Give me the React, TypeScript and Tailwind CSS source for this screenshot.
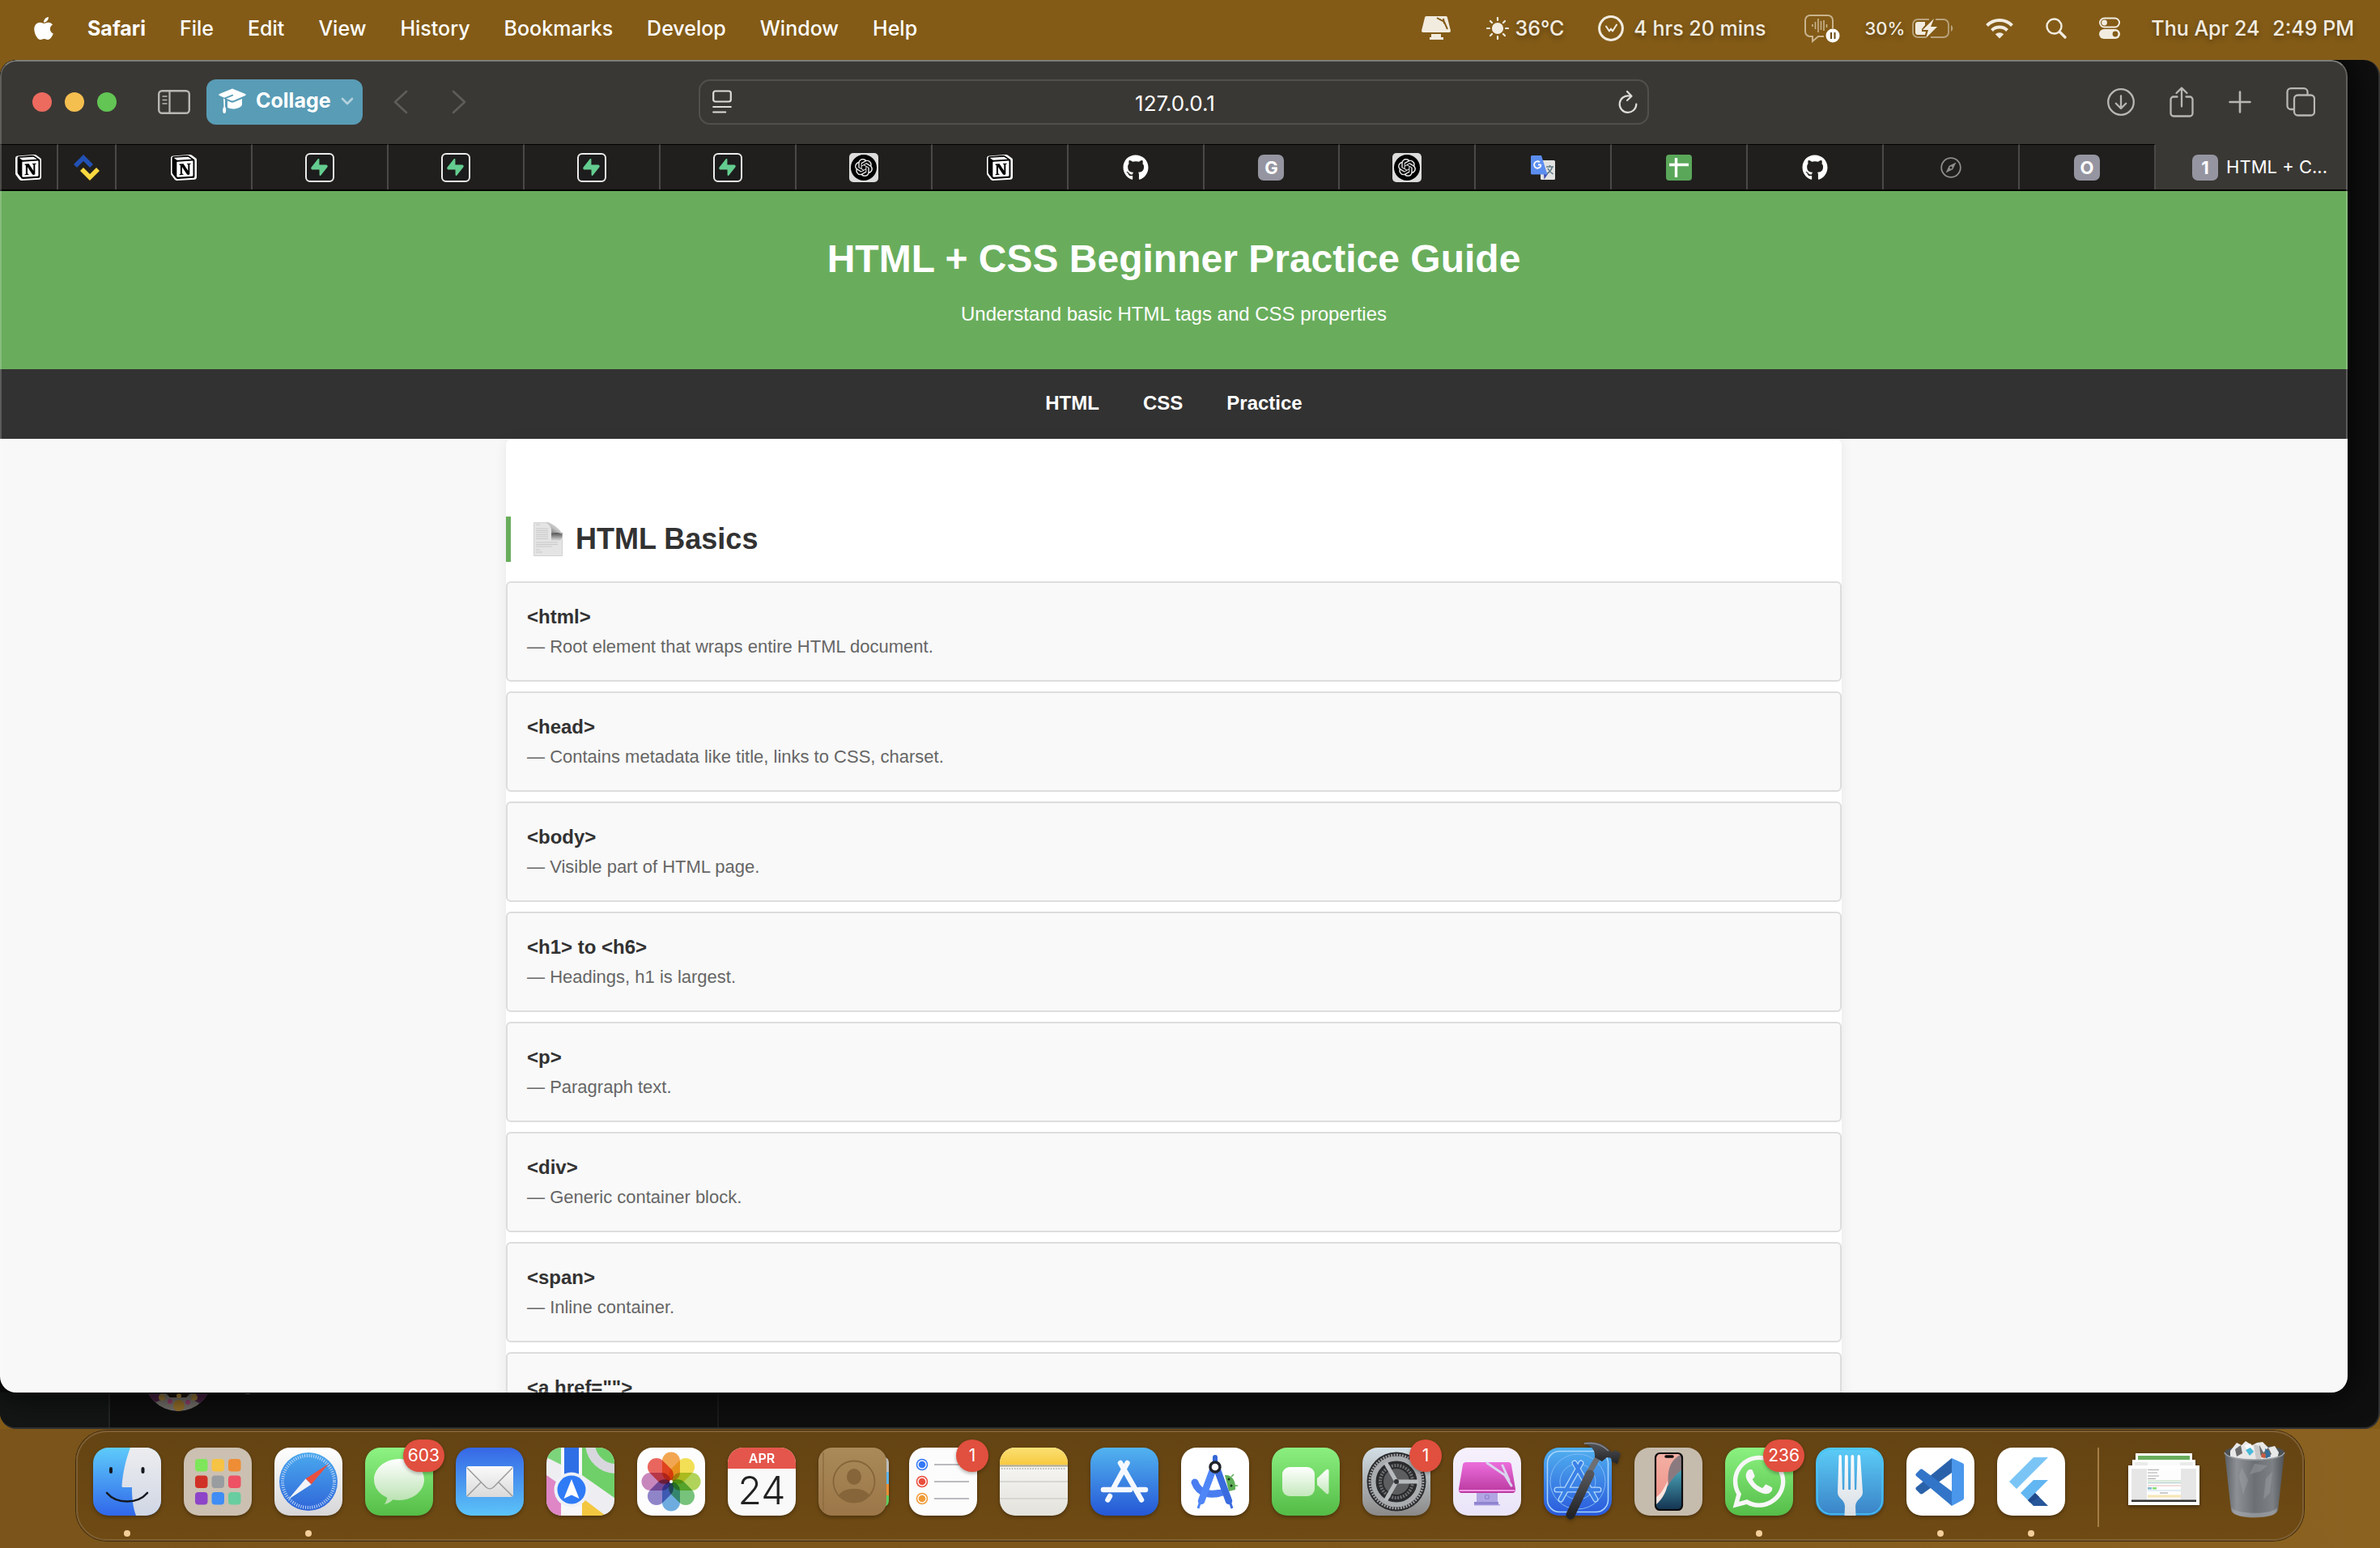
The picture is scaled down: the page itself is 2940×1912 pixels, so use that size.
import type { ReactNode } from "react";
import { FaApple, FaGithub, FaWhatsapp } from "react-icons/fa";
import { SiNotion, SiOpenai, SiSupabase } from "react-icons/si";

const menus = ["File", "Edit", "View", "History", "Bookmarks", "Develop", "Window", "Help"];

const entries = [
  { tag: "<html>", text: "Root element that wraps entire HTML document." },
  { tag: "<head>", text: "Contains metadata like title, links to CSS, charset." },
  { tag: "<body>", text: "Visible part of HTML page." },
  { tag: "<h1> to <h6>", text: "Headings, h1 is largest." },
  { tag: "<p>", text: "Paragraph text." },
  { tag: "<div>", text: "Generic container block." },
  { tag: "<span>", text: "Inline container." },
  { tag: '<a href="">', text: "Hyperlink." },
];

/* ---------- Menu bar ---------- */

function MonitorIcon() {
  return (
    <svg className="h-8 w-9" viewBox="0 0 36 32" aria-hidden="true">
      <path d="M6 1h24a2 2 0 0 1 2 2l4 16a2 2 0 0 1-2 2H2a2 2 0 0 1-2-2L4 3a2 2 0 0 1 2-2Z" fill="currentColor" />
      <path d="M12 23h12v4h3v3H10v-3h2Z" fill="currentColor" />
      <path d="m19 3 9 5 4 9M27 4l1 6" stroke="#835b17" strokeWidth="2" fill="none" />
    </svg>
  );
}

function SunIcon() {
  return (
    <svg className="size-7" viewBox="0 0 28 28" fill="none" stroke="currentColor" strokeWidth="2.2" strokeLinecap="round" aria-hidden="true">
      <circle cx="14" cy="14" r="6" fill="currentColor" />
      <path d="M14 1v3M14 24v3M1 14h3M24 14h3M5 5l2 2M21 21l2 2M5 23l2-2M21 7l2-2" />
    </svg>
  );
}

function ClockIcon() {
  return (
    <svg className="size-8" viewBox="0 0 32 32" fill="none" stroke="currentColor" aria-hidden="true">
      <circle cx="16" cy="16" r="14.4" strokeWidth="3" />
      <path d="m10 13.500 4 6 2-3 2 3 5-8" strokeWidth="2" strokeLinecap="round" strokeLinejoin="round" />
    </svg>
  );
}

function BubbleIcon() {
  return (
    <svg className="h-9 w-11" viewBox="0 0 44 36" fill="none" aria-hidden="true">
      <path d="M35 18V8a6 6 0 0 0-6-6H7a6 6 0 0 0-6 6v14a6 6 0 0 0 6 6h3v6l7-6h7" stroke="#c9b38c" strokeWidth="2" />
      <path d="M10 13v3M13.500 10v9M17 6v17M20.500 9v11M24 8v13M27.500 13v4" stroke="#c9b38c" strokeWidth="1.600" />
      <circle cx="35" cy="27" r="8.500" fill="#fff" />
      <path d="M33 23v8M37.500 23v8" stroke="#6b4a12" strokeWidth="2" />
    </svg>
  );
}

function BatteryIcon() {
  return (
    <svg className="h-7 w-13" viewBox="0 0 52 28" fill="none" aria-hidden="true">
      <path d="M22 3H8a6 6 0 0 0-6 6v10a6 6 0 0 0 6 6h10M30 3h10a6 6 0 0 1 6 6v10a6 6 0 0 1-6 6H24" stroke="#b9a47d" strokeWidth="1.800" />
      <path d="M49 10c3 2 3 6 0 8Z" fill="#b9a47d" />
      <path d="M8 6h9v4l-4 5v3h5l-1 4H8a3 3 0 0 1-3-3V9a3 3 0 0 1 3-3Z" fill="currentColor" />
      <path d="M28 2 14 16h7l-3 10 14-14h-8Z" fill="currentColor" />
    </svg>
  );
}

function WifiIcon() {
  return (
    <svg className="h-[26px] w-[34px]" viewBox="0 0 34 26" fill="none" stroke="currentColor" strokeWidth="4" aria-hidden="true">
      <path d="M1.500 9.500a22 22 0 0 1 31 0M7.500 15.500a13.500 13.500 0 0 1 19 0" />
      <path d="M17 25.500 11.800 20.300a7.400 7.400 0 0 1 10.400 0Z" fill="currentColor" stroke="none" />
    </svg>
  );
}

function SearchIcon() {
  return (
    <svg className="size-[26px]" viewBox="0 0 26 26" fill="none" stroke="currentColor" strokeLinecap="round" aria-hidden="true">
      <circle cx="10.500" cy="10.500" r="9" strokeWidth="2.400" />
      <path d="m17.500 17.500 6.500 6.500" strokeWidth="3.200" />
    </svg>
  );
}

function ControlIcon() {
  return (
    <svg className="h-7 w-[26px]" viewBox="0 0 26 28" fill="none" aria-hidden="true">
      <rect x="1" y="1.500" width="24" height="11" rx="5.500" stroke="currentColor" strokeWidth="2" />
      <circle cx="6.500" cy="7" r="3.400" fill="currentColor" />
      <rect x="0" y="15" width="26" height="12" rx="6" fill="currentColor" />
      <circle cx="20" cy="21" r="3.400" fill="#835b17" />
    </svg>
  );
}

function MenuBar() {
  return (
    <header className="flex h-[74px] shrink-0 items-center justify-between bg-[#835b17] pr-8 pb-1 pl-[38px] text-[25px] leading-8 font-medium text-white [text-shadow:0_3px_6px_rgba(0,0,0,0.35)]">
      <nav aria-label="Application menu" className="flex items-center gap-[42px]">
        <button aria-label="Apple menu" className="-mr-1">
          <FaApple className="size-8" />
        </button>
        <button className="font-bold">Safari</button>
        {menus.map((m) => (
          <button key={m}>{m}</button>
        ))}
      </nav>
      <div className="flex items-center gap-10 text-[#f2ece0]">
        <MonitorIcon />
        <span className="ml-1 flex items-center gap-2">
          <SunIcon />
          36°C
        </span>
        <span className="ml-0.5 flex items-center gap-3">
          <ClockIcon />4 hrs 20 mins
        </span>
        <span className="-mr-[10px] ml-2">
          <BubbleIcon />
        </span>
        <span className="flex items-center gap-2">
          <span className="text-[22px]">30%</span>
          <BatteryIcon />
        </span>
        <WifiIcon />
        <SearchIcon />
        <ControlIcon />
        <span className="-ml-0.5 flex gap-4">
          <span>Thu Apr 24</span>
          <span>2:49 PM</span>
        </span>
      </div>
    </header>
  );
}

/* ---------- Browser toolbar ---------- */

function SidebarIcon() {
  return (
    <svg className="h-[30px] w-10" viewBox="0 0 40 30" fill="none" stroke="currentColor" aria-hidden="true">
      <rect x="1.200" y="1.200" width="37.600" height="27.600" rx="4" strokeWidth="2.400" />
      <path d="M14.500 1v28" strokeWidth="2.200" />
      <path d="M5.500 8h6M5.500 12.500h6M5.500 17h6" strokeWidth="1.500" />
    </svg>
  );
}

function CapIcon() {
  return (
    <svg className="h-8 w-[34px]" viewBox="0 0 34 32" fill="currentColor" aria-hidden="true">
      <path d="M17 .500 33 7c1 .500 1 1.500 0 2L19 15c-1.500.600-3 .500-4 0l-5.500-2.200 8-3.300c1.300-.5.700-2.200-.6-1.700L7 11.800 1 9C0 8.500 0 7.500 1 7Z" />
      <path d="m11 15.500 3.500 1.600c1.700.700 3.300.700 5 0L29 13v7c0 3-6 5.500-11 5.500-3 0-5-.6-7-1.700Z" />
      <path d="M6 12.500 8 14v9c1.500 1 1.500 6 .500 7.500-.8.800-2 .8-2.600 0C5 29 5 24 6.500 23Z" />
    </svg>
  );
}

function Chevron({ dir }: { dir: "left" | "right" }) {
  return (
    <svg className="h-[30px] w-[18px]" viewBox="0 0 18 30" fill="none" stroke="#5f5d59" strokeWidth="2.600" strokeLinecap="round" strokeLinejoin="round" aria-hidden="true">
      <path d={dir === "left" ? "M16 2 2 15l14 13" : "M2 2l14 13L2 28"} />
    </svg>
  );
}

function Toolbar() {
  return (
    <div className="flex h-[104px] shrink-0 items-center bg-[#3a3834] px-10 text-[#b9b7b3]">
      <div className="flex flex-1 items-center">
        <div className="flex gap-4">
          <button aria-label="Close" className="size-6 rounded-full bg-[#ed6a5f]" />
          <button aria-label="Minimise" className="size-6 rounded-full bg-[#f5bf4f]" />
          <button aria-label="Zoom" className="size-6 rounded-full bg-[#62c554]" />
        </div>
        <button aria-label="Sidebar" className="ml-[51px]">
          <SidebarIcon />
        </button>
        <button className="ml-5 flex h-14 w-[193px] items-center gap-3 rounded-xl bg-[#599cb6] pb-0.5 pl-[15px] text-[25px] font-bold text-white">
          <CapIcon />
          Collage
          <svg className="h-[10px] w-4" viewBox="0 0 16 10" fill="none" stroke="#b4d2de" strokeWidth="2.600" strokeLinecap="round" strokeLinejoin="round" aria-hidden="true">
            <path d="m2 2 6 6 6-6" />
          </svg>
        </button>
        <button aria-label="Back" className="ml-[38px]">
          <Chevron dir="left" />
        </button>
        <button aria-label="Forward" className="ml-[54px]">
          <Chevron dir="right" />
        </button>
      </div>
      <label className="flex h-14 w-[1174px] items-center justify-between rounded-[14px] border-2 border-[#51504c] pr-3 pl-[15px] text-[#dddcd9]">
        <svg className="h-[30px] w-6" viewBox="0 0 24 30" fill="none" stroke="currentColor" strokeWidth="2.200" strokeLinecap="round" aria-hidden="true">
          <rect x="1.200" y="1.500" width="21.600" height="13" rx="2.500" />
          <path d="M1.200 21h21.600M1.200 27.500h15" />
        </svg>
        <input aria-label="Address" defaultValue="127.0.0.1" className="min-w-0 flex-1 bg-transparent pt-0.5 text-center text-[26px] text-white outline-none" />
        <svg className="h-[30px] w-6" viewBox="0 0 24 30" fill="none" stroke="currentColor" strokeWidth="2.200" strokeLinecap="round" strokeLinejoin="round" aria-hidden="true">
          <path d="M14 7.500a10.300 10.300 0 1 0 8.300 10M11 2l5.500 5.800L11 13" />
        </svg>
      </label>
      <div className="flex flex-1 items-center justify-end gap-[43px]">
        <button aria-label="Downloads">
          <svg className="size-[34px]" viewBox="0 0 34 34" fill="none" stroke="currentColor" strokeWidth="2.300" strokeLinecap="round" strokeLinejoin="round" aria-hidden="true">
            <circle cx="17" cy="17" r="15.800" />
            <path d="M17 9.500v15M10.800 18.800 17 25l6.200-6.200" />
          </svg>
        </button>
        <button aria-label="Share">
          <svg className="h-[38px] w-[30px]" viewBox="0 0 30 38" fill="none" stroke="currentColor" strokeWidth="2.300" strokeLinecap="round" strokeLinejoin="round" aria-hidden="true">
            <path d="M9.500 12.500H5a3.500 3.500 0 0 0-3.500 3.500v17A3.500 3.500 0 0 0 5 36.500h20a3.500 3.500 0 0 0 3.500-3.500V16a3.500 3.500 0 0 0-3.500-3.500h-4.500M15 24.500V2M8.500 8 15 1.700 21.500 8" />
          </svg>
        </button>
        <button aria-label="New tab">
          <svg className="size-7" viewBox="0 0 28 28" stroke="currentColor" strokeWidth="2.600" strokeLinecap="round" aria-hidden="true">
            <path d="M14 1.500v25M1.500 14h25" />
          </svg>
        </button>
        <button aria-label="Tab overview">
          <svg className="size-9" viewBox="0 0 36 36" fill="none" stroke="currentColor" strokeWidth="2.300" aria-hidden="true">
            <rect x="10" y="9.500" width="25" height="25" rx="4.500" />
            <path d="M10 27H6a4.500 4.500 0 0 1-4.500-4.500v-17A4.500 4.500 0 0 1 6 1.200h16a4.500 4.500 0 0 1 4.500 4.500v3.500" />
          </svg>
        </button>
      </div>
    </div>
  );
}

/* ---------- Tabs ---------- */

function Notion() {
  return (
    <span className="grid size-8 place-items-center">
      <svg className="col-start-1 row-start-1 size-8" viewBox="0 0 32 32" aria-hidden="true">
        <path d="M3 1.600 22.500 0c1.500-.1 2.500 0 3.500.7l4.800 3.500c1 .7 1.200 1.400 1.200 2.600V27.500c0 2-.9 3-2.700 3.200L8 32c-1.500.1-2.400-.2-3.200-1.200L.9 25.600C.2 24.600 0 24 0 22.700V4.500C0 2.700 1.200 1.800 3 1.600Z" fill="#fff" />
      </svg>
      <SiNotion className="col-start-1 row-start-1 size-[29px] text-black" />
    </span>
  );
}

function Supabase() {
  return (
    <span className="flex size-9 items-center justify-center rounded-[6px] border-2 border-[#ececec] bg-[#1c1c1c]">
      <SiSupabase className="size-[21px] text-[#64cc8f]" />
    </span>
  );
}

function Gpt() {
  return (
    <span className="flex size-9 items-center justify-center rounded-[5px] bg-[#dcdcdc]">
      <span className="flex size-8 items-center justify-center rounded-full bg-black">
        <SiOpenai className="size-[22px] text-[#e6e6e6]" />
      </span>
    </span>
  );
}

function Letter({ children }: { children: string }) {
  return (
    <span className="flex size-8 items-center justify-center rounded-[7px] bg-[#9595a1] text-[22px] leading-8 font-bold text-white">
      {children}
    </span>
  );
}

function Ribbon() {
  return (
    <svg className="size-8" viewBox="0 0 32 32" fill="none" strokeWidth="5.600" aria-hidden="true">
      <path d="m2 14 10-10 10 10" stroke="#2251b5" />
      <path d="m10 18 10 10 10-10" stroke="#fbd93f" />
    </svg>
  );
}

function Translate() {
  return (
    <svg className="size-8" viewBox="0 0 32 32" aria-hidden="true">
      <rect x="13" y="7" width="18" height="24" rx="1.500" fill="#e2e2e2" />
      <path d="M20 15h9M24.500 13v2M27.500 15c-1 4-4 7-7 9M22 17c1.500 3 4 5.500 6.500 7" stroke="#607b86" strokeWidth="1.600" fill="none" />
      <path d="M17 24h5l-4.500 6.500Z" fill="#4150b0" />
      <path d="M2.500 1H14l7.500 23.500h-19A1.500 1.500 0 0 1 1 23V2.500A1.500 1.500 0 0 1 2.500 1Z" fill="#5b8def" />
      <path d="M13.500 12.500H10M13.500 12.500A4.200 4.200 0 1 1 12 9.300" stroke="#fff" strokeWidth="1.900" fill="none" />
    </svg>
  );
}

function Sheets() {
  return (
    <svg className="size-8" viewBox="0 0 32 32" aria-hidden="true">
      <rect width="32" height="32" rx="4" fill="#5aa75a" />
      <path d="M4 12.500h24M12.500 4v24" stroke="#fff" strokeWidth="3.400" />
    </svg>
  );
}

function Compass() {
  return (
    <svg className="size-[26px]" viewBox="0 0 26 26" fill="none" stroke="#8f8d8a" strokeWidth="1.800" aria-hidden="true">
      <circle cx="13" cy="13" r="11.800" />
      <path d="m19.500 6.500-4.200 8.800-8.800 4.200 4.200-8.800Z" fill="#8f8d8a" stroke="none" />
      <circle cx="13" cy="13" r="1.500" fill="#201f1d" stroke="none" />
    </svg>
  );
}

const github = <FaGithub className="size-8 text-white" />;

const tabs: { name: string; icon: ReactNode }[] = [
  { name: "Notion", icon: <Notion /> },
  { name: "Supabase", icon: <Supabase /> },
  { name: "Supabase auth", icon: <Supabase /> },
  { name: "Supabase tables", icon: <Supabase /> },
  { name: "Supabase docs", icon: <Supabase /> },
  { name: "ChatGPT", icon: <Gpt /> },
  { name: "Notion notes", icon: <Notion /> },
  { name: "GitHub", icon: github },
  { name: "G", icon: <Letter>G</Letter> },
  { name: "ChatGPT chat", icon: <Gpt /> },
  { name: "Translate", icon: <Translate /> },
  { name: "Sheets", icon: <Sheets /> },
  { name: "GitHub repository", icon: github },
  { name: "Safari page", icon: <Compass /> },
  { name: "O", icon: <Letter>O</Letter> },
];

function TabBar() {
  return (
    <div role="tablist" className="flex h-[58px] shrink-0 border-b-2 border-black bg-[#201f1d]">
      <button role="tab" aria-label="Pinned Notion" className="flex w-[72px] items-center justify-center border-t border-r-2 border-t-black border-r-[#4b4947]">
        <Notion />
      </button>
      <button role="tab" aria-label="Pinned page" className="flex w-[72px] items-center justify-center border-t border-r-2 border-t-black border-r-[#4b4947]">
        <Ribbon />
      </button>
      {tabs.map((t) => (
        <button key={t.name} role="tab" aria-label={t.name} className="flex flex-1 items-center justify-center border-t border-r-2 border-t-black border-r-[#4b4947]">
          {t.icon}
        </button>
      ))}
      <button role="tab" aria-selected="true" className="flex w-[237px] items-center justify-center gap-[10px] bg-[#3a3834] pt-px pl-5 text-[22px] text-white">
        <Letter>1</Letter>
        HTML + C...
      </button>
    </div>
  );
}

/* ---------- Web page ---------- */

function PageEmoji() {
  return (
    <svg className="h-[42px] w-9" viewBox="0 0 36 42" aria-hidden="true">
      <defs>
        <linearGradient id="curl" x1="0" y1="1" x2="1" y2="0">
          <stop offset="0" stopColor="#4a4a4a" />
          <stop offset=".5" stopColor="#bdbdbd" />
          <stop offset="1" stopColor="#fafafa" />
        </linearGradient>
        <linearGradient id="curlShade" x1="0" y1="0" x2="0" y2="1">
          <stop offset="0" stopColor="#4f4f4f" />
          <stop offset="1" stopColor="#e2e2e2" />
        </linearGradient>
      </defs>
      <path d="M.500.500h18L35.500 14v27.500H.500Z" fill="#e4e4e4" stroke="#d2d2d2" />
      <path d="M3 3h5M3 8h15M3 10.500h15M3 13h15M3 15.500h15M3 18h15M3 20.500h15M3 25h27M3 27.500h27M3 30h20M3 34h5M3 37h8" stroke="#c9c9c9" strokeWidth="1" />
      <path d="M22 13h13.500v5L33 23H22Z" fill="url(#curlShade)" />
      <path d="M15 .500c6 2 8 8 7 13.500 5-1.500 9-1.500 13.500 1C33 9 26 3 18.500.500Z" fill="url(#curl)" />
    </svg>
  );
}

function WebPage() {
  return (
    <div className="flex min-h-0 flex-1 flex-col overflow-hidden bg-[#f8f8f8] font-['Liberation_Sans',Arial,sans-serif]">
      <header className="bg-[#69ad5c] pt-12 pb-[50px] text-center text-white">
        <h1 className="text-[48px] leading-[72px] font-bold">HTML + CSS Beginner Practice Guide</h1>
        <p className="mt-[14px] text-[24px] leading-9">Understand basic HTML tags and CSS properties</p>
      </header>
      <nav className="flex justify-center gap-[54px] bg-[#323232] pt-6 pb-[26px] text-[24px] leading-9 font-bold text-white">
        <a href="#html">HTML</a>
        <a href="#css">CSS</a>
        <a href="#practice">Practice</a>
      </nav>
      <main className="mx-auto w-full max-w-[1650px] shrink-0 rounded-lg bg-white pt-24 shadow-[0_0_16px_rgba(0,0,0,0.07)]">
        <section id="html">
          <h2 className="mb-6 flex h-14 items-center gap-4 border-l-[6px] border-[#69ad5c] pl-7 text-[36px] leading-[56px] font-bold text-[#323232]">
            <PageEmoji />
            HTML Basics
          </h2>
          <ul className="flex flex-col gap-3">
            {entries.map((e) => (
              <li key={e.tag} className="rounded-md border-2 border-[#dddddd] bg-[#f9f9f9] px-6 pt-6 pb-[22px]">
                <strong className="block text-[24px] leading-9 text-[#323232]">{e.tag}</strong>
                <span className="block text-[22px] leading-[38px] text-[#666666]">— {e.text}</span>
              </li>
            ))}
          </ul>
        </section>
      </main>
    </div>
  );
}

/* ---------- Dock ---------- */

function Art({ children }: { children: ReactNode }) {
  return (
    <svg className="size-[84px] overflow-visible drop-shadow-[0_2px_2px_rgba(0,0,0,0.3)]" viewBox="0 0 84 84" fill="none" aria-hidden="true">
      {children}
    </svg>
  );
}

function Grad({ id, from, to }: { id: string; from: string; to: string }) {
  return (
    <linearGradient id={id} x1="0" y1="0" x2="0" y2="1">
      <stop stopColor={from} />
      <stop offset="1" stopColor={to} />
    </linearGradient>
  );
}

function Tile({ fill }: { fill: string }) {
  return <rect width="84" height="84" rx="19" fill={fill} />;
}

const finder = (
  <Art>
    <defs>
      <Grad id="fA" from="#5ecbfa" to="#3067ea" />
      <Grad id="fB" from="#ededf0" to="#cfd6e4" />
      <clipPath id="fC"><rect width="84" height="84" rx="19" /></clipPath>
    </defs>
    <g clipPath="url(#fC)">
      <rect width="84" height="84" fill="url(#fA)" />
      <path d="M46 0c-6 16-9 30-10.500 47 0 1.500.5 2 2 2H48c0 13 1 24 5 35h31V0Z" fill="url(#fB)" />
    </g>
    <path d="M22 26v4M61.500 26v4" stroke="#15181f" strokeWidth="4" strokeLinecap="round" />
    <path d="M17 56c12 14 38 14 50 0" stroke="#15181f" strokeWidth="2.600" strokeLinecap="round" />
  </Art>
);

const padColors = ["#7ee65a", "#f7c344", "#ee8d35", "#d03026", "#9a9da0", "#ee5163", "#8e44c8", "#3f8df5", "#68cda0"];

const launchpad = (
  <Art>
    <Tile fill="#cbc0b1" />
    {padColors.map((c, i) => (
      <rect key={c} x={14 + (i % 3) * 20.500} y={14 + Math.floor(i / 3) * 20.500} width="15.500" height="15.500" rx="4" fill={c} />
    ))}
  </Art>
);

const safari = (
  <Art>
    <defs>
      <Grad id="sA" from="#ffffff" to="#d6d6d8" />
      <Grad id="sB" from="#4aa9ee" to="#2f66d9" />
    </defs>
    <Tile fill="url(#sA)" />
    <circle cx="42" cy="42" r="36" fill="url(#sB)" />
    <circle cx="42" cy="42" r="32" stroke="#c4dcf8" strokeWidth="4" strokeDasharray="1 1.800" />
    <path d="M67 20 45.500 45.500 38.500 38.500Z" fill="#e9503f" />
    <path d="M17 64 38.500 38.500 45.500 45.500Z" fill="#f2f4f7" />
  </Art>
);

const messages = (
  <Art>
    <defs>
      <Grad id="mA" from="#8df383" to="#55bd47" />
      <Grad id="mB" from="#ffffff" to="#b5e0ac" />
    </defs>
    <Tile fill="url(#mA)" />
    <path d="M42 14c17 0 31 11.500 31 25.500S59 65 42 65c-2.700 0-5.200-.3-7.600-.8-2.800 3-6.400 5-10.900 5.800 2.200-2.500 3.500-5.200 3.700-8.300C17 57.200 11 49 11 39.500 11 25.500 25 14 42 14Z" fill="url(#mB)" />
  </Art>
);

const mail = (
  <Art>
    <defs>
      <Grad id="eA" from="#3667e6" to="#5cc4f8" />
      <Grad id="eB" from="#fafafa" to="#dadada" />
    </defs>
    <Tile fill="url(#eA)" />
    <rect x="13" y="23" width="58" height="38" rx="3" fill="url(#eB)" />
    <path d="m14 25 23 23.500c3 3 7 3 10 0L70 25M14 60l17-17M70 60 53 43" stroke="#9b9b9b" strokeWidth="1.500" />
  </Art>
);

const maps = (
  <Art>
    <clipPath id="pC"><rect width="84" height="84" rx="19" /></clipPath>
    <g clipPath="url(#pC)">
      <rect width="84" height="84" fill="#eeeef2" />
      <path d="M0 0h18v21L0 12Z" fill="#7cd57a" />
      <path d="M44 0h40v62L44 34Z" fill="#6fd069" />
      <path d="M54-4a32 32 0 0 0 32 30" stroke="#d7d7dd" strokeWidth="12" />
      <path d="M0 34 20 48v36H0Z" fill="#de86c6" />
      <path d="M44 62 73 84H44Z" fill="#f3c73f" />
      <path d="M18 0h26v84H18Z" fill="#f7f7fa" />
      <path d="M22 0h18v40H22Z" fill="#2f6fe6" />
    </g>
    <circle cx="31" cy="52" r="21.500" fill="#eef1f7" />
    <circle cx="31" cy="52" r="17.500" fill="#2f7bf6" />
    <path d="M31 39 40.500 63 31 58.500 21.500 63Z" fill="#fff" />
  </Art>
);

const petals = ["#f29b3a", "#f3dd3e", "#a9cf44", "#66bd6b", "#5ba3de", "#8274c4", "#c277b6", "#e8524a"];

const photos = (
  <Art>
    <Tile fill="#fdfdfd" />
    {petals.map((c, i) => (
      <rect key={c} x="31" y="5.500" width="22" height="36" rx="11" fill={c} fillOpacity=".88" transform={`rotate(${i * 45} 42 42)`} className="mix-blend-multiply" />
    ))}
    <circle cx="42" cy="42" r="2" fill="#fff" />
  </Art>
);

const calendar = (
  <span className="flex size-[84px] flex-col overflow-hidden rounded-[19px] bg-[#f9f9f9] text-center drop-shadow-[0_2px_2px_rgba(0,0,0,0.3)]">
    <span className="bg-[#e4564b] pt-px text-[16px] leading-[25px] font-semibold text-white">APR</span>
    <span className="text-[48px] leading-[54px] font-light text-[#222222]">24</span>
  </span>
);

const contacts = (
  <Art>
    <defs><Grad id="cA" from="#a98a58" to="#9c7648" /></defs>
    <path d="M80 12a6 6 0 0 1 7 6v12h-7Z" fill="#bdbdbd" />
    <path d="M80 30h7v15h-7Z" fill="#5fb4ea" />
    <path d="M80 45h7v14h-7Z" fill="#ec8f35" />
    <path d="M80 59h7v6c0 4-2 8-7 8Z" fill="#5fce5c" />
    <rect width="84" height="84" rx="17" fill="url(#cA)" />
    <path d="M6 6v72" stroke="#8e6d3e" strokeWidth="1.500" />
    <circle cx="44" cy="42" r="25.500" stroke="#86653a" strokeWidth="1.800" />
    <ellipse cx="44" cy="36" rx="9" ry="10" fill="#86653a" />
    <path d="M25 59c6-11 32-11 38 0a26 26 0 0 1-38 0Z" fill="#86653a" />
  </Art>
);

const reminders = (
  <Art>
    <Tile fill="#fcfcfc" />
    {["#3478f6", "#ea4e3d", "#f09a37"].map((c, i) => (
      <g key={c}>
        <circle cx="16" cy={21 + i * 21} r="6.500" stroke={c} strokeWidth="1.500" />
        <circle cx="16" cy={21 + i * 21} r="4.300" fill={c} />
        <path d={i === 0 ? "M31 21h43" : i === 1 ? "M31 42h43" : "M31 63h43"} stroke="#a5a5ab" strokeWidth="1.500" />
      </g>
    ))}
  </Art>
);

const notes = (
  <Art>
    <defs>
      <Grad id="nA" from="#fbe074" to="#f7c93f" />
      <Grad id="nB" from="#fbfbfa" to="#e3e2dc" />
      <clipPath id="nC"><rect width="84" height="84" rx="19" /></clipPath>
    </defs>
    <g clipPath="url(#nC)">
      <rect width="84" height="84" fill="url(#nB)" />
      <rect width="84" height="21.500" fill="url(#nA)" />
      <path d="M0 22.500h84" stroke="#aca68f" strokeWidth="1.800" />
      <path d="M2 26h80" stroke="#a7a7a3" strokeWidth="1.600" strokeDasharray="1.500 1.700" />
      <path d="M0 42h84M0 63h84" stroke="#cfcfcc" strokeWidth="1.500" />
    </g>
  </Art>
);

const appStore = (
  <Art>
    <defs><Grad id="aA" from="#52b3ef" to="#2557d6" /></defs>
    <Tile fill="url(#aA)" />
    <g stroke="#f5f9ff" strokeWidth="6.500" strokeLinecap="round">
      <path d="M45.500 19 28.500 50M37 19 63 64.500M16 52h33M60 52h8M24 60l-2.500 4.500" />
    </g>
  </Art>
);

const androidStudio = (
  <Art>
    <Tile fill="#ffffff" />
    <path d="M54 34c8-1 14 6 13 18l-8 2Z" fill="#5fae57" />
    <path d="m62 36 3-3M66 47h4" stroke="#5fae57" strokeWidth="1.600" />
    <circle cx="59" cy="39" r="1.500" fill="#143019" />
    <circle cx="62" cy="47" r="1.500" fill="#143019" />
    <path d="M17 43c5 14 20 17 34 12" stroke="#4a7df0" strokeWidth="9" strokeLinecap="round" />
    <path d="M42 12v8" stroke="#3467d6" strokeWidth="6" strokeLinecap="round" />
    <path d="m39 30-15 36-3 9" stroke="#4f86f7" strokeWidth="3" />
    <path d="m45 30 15 36 3 9" stroke="#3a6ce0" strokeWidth="3" />
    <path d="m39 28-14 38" stroke="#4f86f7" strokeWidth="8.500" strokeLinecap="round" />
    <path d="m45 28 14 38" stroke="#3a6ce0" strokeWidth="8.500" strokeLinecap="round" />
    <path d="M35 52 42 35l7 17Z" fill="#fff" />
    <circle cx="42" cy="24" r="6" fill="#fff" stroke="#20242b" strokeWidth="3.500" />
  </Art>
);

const faceTime = (
  <Art>
    <defs>
      <Grad id="vA" from="#8bef80" to="#54bb46" />
      <Grad id="vB" from="#ffffff" to="#c4e9bc" />
    </defs>
    <Tile fill="url(#vA)" />
    <rect x="13" y="24" width="40" height="36" rx="9" fill="url(#vB)" />
    <path d="M56 38 67 27.500c1.800-1.600 3.500-.9 3.500 1.500v26c0 2.400-1.700 3.100-3.500 1.500L56 46Z" fill="url(#vB)" />
  </Art>
);

const settings = (
  <Art>
    <defs><Grad id="gA" from="#d3dfe6" to="#8b8988" /></defs>
    <Tile fill="url(#gA)" />
    <circle cx="42" cy="42" r="36.500" fill="#2a2b2d" />
    <circle cx="42" cy="42" r="33" stroke="#9fa1a4" strokeWidth="3" strokeDasharray="2 1.450" />
    <circle cx="42" cy="42" r="28.500" stroke="#a9acae" strokeWidth="6" />
    <circle cx="42" cy="42" r="20" stroke="#6e7072" strokeWidth="4" strokeDasharray="2 1.500" />
    <circle cx="42" cy="42" r="16" fill="#5c5e60" />
    <path d="M42 42h27M42 42 28.500 18.600M42 42 28.500 65.400" stroke="#b7babc" strokeWidth="5" />
    <circle cx="42" cy="42" r="3" fill="#303133" />
  </Art>
);

const cleaner = (
  <Art>
    <defs>
      <Grad id="kA" from="#f6f1fc" to="#e9e4f8" />
      <Grad id="kB" from="#ec6edc" to="#b9389f" />
    </defs>
    <Tile fill="url(#kA)" />
    <path d="M29 56h26v14h3v1.500H26V70h3Z" fill="#b1a6e3" />
    <rect x="26" y="67" width="30" height="3.500" fill="#8f84cf" />
    <path d="M16 18h52a4 4 0 0 1 4 3l5 30c.5 3-1 5-4 5H11c-3 0-4.500-2-4-5l5-30a4 4 0 0 1 4-3Z" fill="url(#kB)" />
    <path d="M7.500 53h69" stroke="#f29ae6" strokeWidth="2" />
    <path d="M42 19 64 34l8 13M61 22l8 18" stroke="#d9d5ee" strokeWidth="3" strokeLinecap="round" />
    <circle cx="42" cy="61" r="2.500" stroke="#8f84cf" strokeWidth="1.200" />
  </Art>
);

const xcode = (
  <Art>
    <defs>
      <Grad id="xA" from="#50b0ef" to="#2a59dc" />
      <Grad id="xB" from="#55565a" to="#232428" />
    </defs>
    <Tile fill="url(#xA)" />
    <rect x="4.500" y="4.500" width="75" height="75" rx="15" stroke="#a9d6fb" strokeWidth="1.500" />
    <circle cx="42" cy="42" r="34" stroke="#7fb9f5" strokeWidth="1" />
    <circle cx="42" cy="42" r="22" stroke="#7fb9f5" strokeWidth="1" />
    <g stroke="#b4dafb" strokeWidth="7" strokeLinecap="round">
      <path d="M46 19 21 64M38 19l26 45M16 52h52" />
    </g>
    <g stroke="#3a80e6" strokeWidth="4.500" strokeLinecap="round">
      <path d="M46 19 21 64M38 19l26 45M16 52h52" />
    </g>
    <path d="M68 10 53 36" stroke="#6e6f73" strokeWidth="7" />
    <path d="M57 33 33 83" stroke="url(#xB)" strokeWidth="11" strokeLinecap="round" />
    <path d="M48-6c14-3 26 0 33 9l4 3 3-3 7 4-4 13-7-3v-4l-6-1-6 5-9-5c1-8-3-14-15-18Z" fill="url(#xB)" />
    <path d="M50-5c13-2 22 1 30 9" stroke="#8a8b90" strokeWidth="1.500" />
  </Art>
);

const phoneMirror = (
  <Art>
    <defs>
      <Grad id="iA" from="#4aa4b8" to="#12304e" />
      <Grad id="iC" from="#f3b0a4" to="#ef8f86" />
      <clipPath id="iB"><rect x="26.500" y="7.500" width="32" height="69" rx="5" /></clipPath>
    </defs>
    <Tile fill="#c6bcae" />
    <g clipPath="url(#iB)">
      <rect x="26" y="7" width="33" height="70" fill="url(#iC)" />
      <path d="M59 8c-14 6-19 18-17 38L59 32Z" fill="#8a7a80" />
      <path d="M59 27C44 38 40 52 26 68v10h33Z" fill="url(#iA)" />
      <path d="M41 41c0 12-6 22-15 30V62c7-5 11-12 15-21Z" fill="#f7e5df" />
    </g>
    <rect x="26" y="7" width="33" height="70" rx="5.500" stroke="#0b0b0d" strokeWidth="2.200" />
    <path d="M39 11h8" stroke="#0b0b0d" strokeWidth="3.500" strokeLinecap="round" />
  </Art>
);

const whatsapp = (
  <span className="flex size-[84px] items-center justify-center rounded-[19px] bg-linear-to-b from-[#8bf281] to-[#55bd48] drop-shadow-[0_2px_2px_rgba(0,0,0,0.3)]">
    <FaWhatsapp className="size-[74px] text-[#f7f7f7]" />
  </span>
);

const fork = (
  <Art>
    <defs>
      <Grad id="oA" from="#5ccdf8" to="#3a82c6" />
      <Grad id="oB" from="#ffffff" to="#d5dde4" />
    </defs>
    <Tile fill="url(#oA)" />
    <rect x="2" y="2" width="80" height="80" rx="17" stroke="#45c5f5" strokeWidth="1.500" />
    <path d="M30 9c1.500 0 1.800 1 1.800 2L33 52h2.300L36 11c0-1 .5-2 1.800-2s1.900 1 1.900 2l.5 41h2.800l.5-41c0-1 .6-2 1.900-2s1.800 1 1.800 2l.8 41h2.200l1.300-41c0-1 .4-2 1.600-2 1.400 0 1.800 1 1.900 2L58 55c0 8-8 8-9 17l.5 12h-14l.5-12c-1-9-9-9-9-17l1.500-44c0-1 .3-2 1.500-2Z" fill="url(#oB)" />
  </Art>
);

const vscode = (
  <Art>
    <Tile fill="#ffffff" />
    <path d="M12 49 56 13v18L20 57c-1 .6-2 .6-3 0l-5-5c-.8-1-.8-2 0-3Z" fill="#2a62aa" />
    <path d="M12 35c-.8-1-.8-2 0-3l5-5c1-.6 2-.6 3 0l36 27v18Z" fill="#3275c8" />
    <path d="m56 13 13 6c1.500.8 2 1.600 2 3v40c0 1.400-.5 2.200-2 3l-13 7Z" fill="#4a97ec" />
  </Art>
);

const flutter = (
  <Art>
    <Tile fill="#ffffff" />
    <path d="M45 12h18L24 51l-9-9Z" fill="#7ac5f6" />
    <path d="M45 40h18L47 56 38 65l-9-9Z" fill="#62b6f1" />
    <path d="m38 65 9-9 16 16H45Z" fill="#27579a" />
    <path d="m38 65 9-9 5 5-11 7Z" fill="#1f4a8c" />
  </Art>
);

const apps: { name: string; art: ReactNode; badge?: string; open?: boolean }[] = [
  { name: "Finder", art: finder, open: true },
  { name: "Launchpad", art: launchpad },
  { name: "Safari", art: safari, open: true },
  { name: "Messages", art: messages, badge: "603" },
  { name: "Mail", art: mail },
  { name: "Maps", art: maps },
  { name: "Photos", art: photos },
  { name: "Calendar", art: calendar },
  { name: "Contacts", art: contacts },
  { name: "Reminders", art: reminders, badge: "1" },
  { name: "Notes", art: notes },
  { name: "App Store", art: appStore },
  { name: "Android Studio", art: androidStudio },
  { name: "FaceTime", art: faceTime },
  { name: "System Settings", art: settings, badge: "1" },
  { name: "CleanMyMac", art: cleaner },
  { name: "Xcode", art: xcode },
  { name: "iPhone Mirroring", art: phoneMirror },
  { name: "WhatsApp", art: whatsapp, badge: "236", open: true },
  { name: "Fork", art: fork },
  { name: "Visual Studio Code", art: vscode, open: true },
  { name: "Flutter", art: flutter, open: true },
];

function StackIcon() {
  return (
    <svg className="mt-[7px] h-16 w-[88px] overflow-visible drop-shadow-[0_2px_2px_rgba(0,0,0,0.4)]" viewBox="0 0 88 64" aria-hidden="true">
      <rect x="9" y="0" width="70" height="20" fill="#fff" />
      <rect x="12" y="3" width="64" height="5" fill="#69ad5c" />
      <rect x="5" y="8" width="78" height="20" fill="#fff" />
      <rect x="8" y="11" width="72" height="10" fill="#eaeaea" />
      <rect x="24" y="11" width="40" height="10" fill="#fafafa" />
      <rect x="0" y="15" width="88" height="49" fill="#fff" />
      <rect x="4" y="19" width="80" height="41" fill="#e6e6e6" />
      <rect x="23" y="19" width="42" height="38" fill="#fdfdfd" />
      <path d="M24 20.500h14M24 24h12M24 28h14M24 31.500h10" stroke="#aaaaaa" strokeWidth="1" />
      <path d="M24 34h41" stroke="#cfe3cc" strokeWidth="1.500" />
      <path d="M24 36.500h41" stroke="#b7d4d0" strokeWidth="1.500" />
      <path d="M24 40h41" stroke="#e9b9b9" strokeWidth="1" />
      <rect x="24" y="42" width="5" height="2.500" fill="#7fb6cf" />
      <rect x="30" y="42" width="5" height="2.500" fill="#82e070" />
      <path d="M24 46h41" stroke="#c6dce8" strokeWidth="1" />
      <path d="M39 49h10" stroke="#999999" strokeWidth="1" />
      <rect x="24" y="51.500" width="41" height="3" fill="#f6e6b4" />
      <rect x="4" y="57.500" width="80" height="2.500" fill="#333333" />
    </svg>
  );
}

function TrashIcon() {
  return (
    <svg className="h-22 w-[76px] overflow-visible" viewBox="0 0 76 88" aria-hidden="true">
      <defs>
        <linearGradient id="tA" x1="0" y1="0" x2="1" y2="0">
          <stop stopColor="#5b5f63" />
          <stop offset=".2" stopColor="#8d9196" />
          <stop offset=".5" stopColor="#6c7074" />
          <stop offset=".8" stopColor="#7d8185" />
          <stop offset="1" stopColor="#4e5256" />
        </linearGradient>
      </defs>
      <ellipse cx="38" cy="6" rx="37" ry="9" fill="#4d5053" />
      <path d="m8 4 8-10 6 3 5-5 8 5 6-3 7-1 7 7 8-2 5 8-2 8-14 4H24L8 12Z" fill="#e8e8e8" />
      <path d="m14 2 7-5 2 10-7 4ZM44-3l5 9 6-6 4 8-6 5-9-4Z" fill="#6b6b6b" />
      <path d="m25-3 8-2 4 6-7 4Z" fill="#fafafa" />
      <path d="m27 3 6-3 4 5-5 5Z" fill="#49b9d8" />
      <path d="m51 1 5 3 2 7-6 2Z" fill="#356f9c" />
      <path d="m47 7 5 1-1 5-5-1Z" fill="#c95b3f" />
      <path d="m37-4 3 19 6-1-2-16Z" fill="#c9c9c9" />
      <path d="M1 6c3 12 71 12 74 0l-8 71c-2 12-56 12-58 0Z" fill="url(#tA)" />
      <path d="M10 74c4 9 52 9 56 0l-.6 5c-3 10-52 10-55 0Z" fill="#a9adb2" opacity=".55" />
      <path d="m38 20 16 2-8 7-14 4ZM22 24l8 16-6 18-5-22ZM52 38l8-8-3 26-8 8Z" fill="#a8acb0" opacity=".35" />
      <path d="M1 6c3 12 71 12 74 0" stroke="#9b9fa3" strokeWidth="1.500" fill="none" />
    </svg>
  );
}

function Dock() {
  return (
    <footer className="flex shrink-0 justify-center bg-linear-to-r from-[#7a541a] via-[#7d561a] to-[#8b6220] pt-0.5 pb-[9px]">
      <div className="flex items-start gap-7 rounded-[38px] border-2 border-[#7f5f33] bg-linear-to-b from-[#644413] to-[#6f4a13] pt-[19px] pr-[21px] pb-[15px] pl-[19px] shadow-[0_0_0_1px_#3d2a0e]">
        {apps.map((a) => (
          <button key={a.name} aria-label={a.name} className="relative size-[84px]">
            {a.art}
            {a.badge && (
              <span className="absolute -top-[10px] -right-[14px] flex h-10 min-w-10 items-center justify-center rounded-full bg-[#e14f3e] px-[6px] text-[21px] leading-10 text-white shadow-[0_2px_4px_rgba(0,0,0,0.3)]">
                {a.badge}
              </span>
            )}
            {a.open && <span className="absolute top-[102px] left-[38px] size-2 rounded-full bg-[#f3cd9a]" />}
          </button>
        ))}
        <span className="mr-2 ml-3 h-[98px] w-0.5 bg-[#a57d45]" />
        <button aria-label="Downloads stack">
          <StackIcon />
        </button>
        <button aria-label="Trash" className="ml-0.5">
          <TrashIcon />
        </button>
      </div>
    </footer>
  );
}

/* ---------- Window behind the browser ---------- */

function BackStrip() {
  return (
    <div className="flex h-[43px] shrink-0">
      <div className="w-[136px] border-r-2 border-[#222424] bg-[#141616]" />
      <div className="flex w-[752px] items-start border-r-2 border-[#1c1c1c] pl-[42px]">
        <svg className="h-6 w-[84px]" viewBox="0 0 84 24" aria-hidden="true">
          <clipPath id="av"><circle cx="42" cy="-19" r="42" /></clipPath>
          <g clipPath="url(#av)">
            <rect width="84" height="24" fill="#77736e" />
            <path d="M0 0h18l6 8-10 4ZM84 0H66l-8 8 12 6Z" fill="#4a2045" />
            <path d="M26 0h32l-6 6H32Z" fill="#1d130c" />
            <circle cx="43" cy="16" r="7" fill="#96702a" />
            <circle cx="22" cy="6" r="4" fill="#9a7a36" />
            <circle cx="62" cy="6" r="4" fill="#9a7a36" />
            <circle cx="32" cy="11" r="3" fill="#96406b" />
            <circle cx="54" cy="12" r="3" fill="#96406b" />
            <circle cx="43" cy="4" r="3" fill="#a9843a" />
          </g>
        </svg>
        <span className="ml-10 h-0.5 w-2 rounded-b-full bg-[#777777]" />
      </div>
    </div>
  );
}

export default function App() {
  return (
    <div className="flex h-screen flex-col overflow-hidden bg-[#835b17] font-[Inter,'Liberation_Sans',sans-serif]">
      <MenuBar />
      <div className="flex min-h-0 flex-1 flex-col overflow-hidden rounded-[20px] border-r-2 border-b-2 border-[#303132] bg-[#0f0f0f] pr-[38px]">
        <div className="relative flex min-h-0 flex-1 flex-col overflow-hidden rounded-[20px] shadow-[0_0_0_1px_#000,0_0_40px_#000]">
          <Toolbar />
          <TabBar />
          <WebPage />
          <div className="pointer-events-none absolute inset-0 rounded-[20px] border-2 border-white/20 border-t-white/35" />
        </div>
        <BackStrip />
      </div>
      <Dock />
    </div>
  );
}
